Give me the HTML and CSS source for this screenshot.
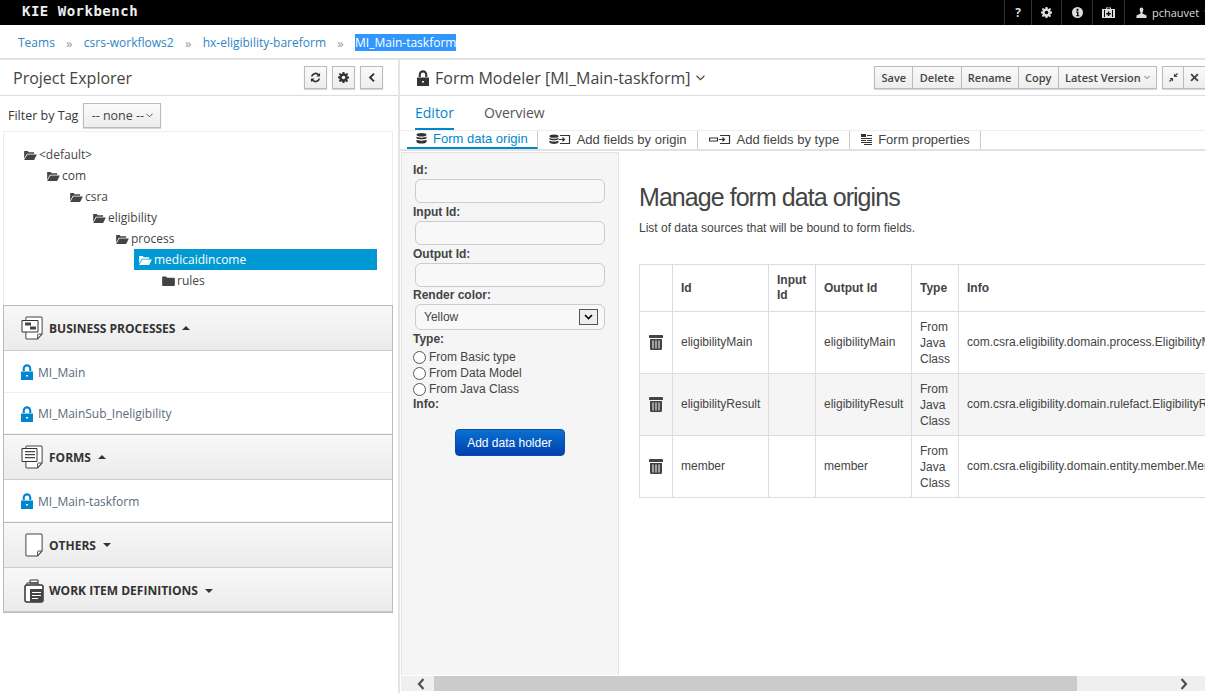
FILE: index.html
```html
<!DOCTYPE html>
<html lang="en">
<head>
    <meta charset="UTF-8">
    <title>KIE Workbench</title>
    <link rel="stylesheet" href="styles.css">
</head>
<body>
    <svg class="defs" width="0" height="0">
        <symbol id="folder-open" viewBox="0 0 14 11"><path d="M0 1h4l1 1.5h6V4H3L0 9.5zM3.6 5H14l-3 6H0z"/></symbol>
        <symbol id="lock" viewBox="0 0 12 16"><path d="M0 7.5h12V16H0zM1.7 7V4.6a4.3 4.3 0 0 1 8.6 0V7H8.2V4.6a2.2 2.2 0 0 0-4.4 0V7zM5 11v1.6h2V11z" fill-rule="evenodd"/></symbol>
        <symbol id="page" viewBox="0 0 20 24" preserveAspectRatio="none"><path d="M2 1h16a1 1 0 0 1 1 1v16l-5 5H2a1 1 0 0 1-1-1V2a1 1 0 0 1 1-1z" fill="#fff" stroke="#444" stroke-width="1.1"/><path d="M19 18h-4a1 1 0 0 0-1 1v4" fill="none" stroke="#444"/></symbol>
        <symbol id="trash" viewBox="0 0 14 15"><path d="M1 0h12a1 1 0 0 1 1 1v2H0V1a1 1 0 0 1 1-1zM1 4h12v9.500a1.500 1.500 0 0 1-1.500 1.500h-9A1.500 1.500 0 0 1 1 13.500zM3.500 5.500v8h1v-8zM6.500 5.500v8h1v-8zM9.500 5.500v8h1v-8z" fill-rule="evenodd"/></symbol>
        <symbol id="db" viewBox="0 0 11 11"><ellipse cx="5.500" cy="1.800" rx="5" ry="1.800"/><path d="M.5 3.600c1 1.500 9 1.500 10 0v1.600c-1 1.500-9 1.500-10 0zM.5 6.500c1 1.500 9 1.500 10 0v2.400c-1 2-9 2-10 0z"/></symbol>
        <symbol id="gear" viewBox="0 0 12 12"><path d="M5 0h2l.3 1.600 1.100.5L9.800 1l1.300 1.300-1.100 1.400.5 1.100 1.500.2v2l-1.500.3-.5 1.100 1 1.400-1.300 1.300-1.400-1-1.100.5L7 12H5l-.3-1.500-1.100-.5-1.400 1L.9 9.700l1-1.400-.5-1.100L0 7V5l1.500-.2.500-1.100-1.100-1.400L2.200 1l1.400 1.100 1.100-.5zM6 4a2 2 0 1 0 0 4 2 2 0 0 0 0-4z" fill-rule="evenodd"/></symbol>
    </svg>

    <header class="topbar">
        <div class="brand">KIE Workbench</div>
        <nav class="topmenu">
            <span class="topitem help"><b>?</b></span>
            <span class="topitem"><svg class="i11"><use href="#gear"/></svg></span>
            <span class="topitem info"><svg class="i11" viewBox="0 0 12 12"><path d="M6 0a6 6 0 1 0 0 12A6 6 0 0 0 6 0zM5 2h2v2H5zM4.500 5H7v4h1v1H4.500V9h1V6h-1z" fill-rule="evenodd"/></svg></span>
            <span class="topitem case"><svg class="i12" viewBox="0 0 13 11"><path d="M4 2V.5h5V2h4v9H0V2zM5 2h3V1.300H5zM2 3v7h1V3zM10 3v7h1V3zM5.800 4.500v1.500H4.300v1.500h1.500V9h1.500V7.500h1.500V6H7.300V4.500z" fill-rule="evenodd"/></svg></span>
            <span class="topitem user"><svg class="i11" viewBox="0 0 12 12"><path d="M4 2.500a2 2 0 0 1 4 0c0 1.500-.5 3-1 3.500v1.200l4.500 2V12H.5V9.200L5 7.200V6c-.5-.5-1-2-1-3.500z"/></svg>pchauvet<svg class="caret" viewBox="0 0 8 5"><path d="M.5.5L4 4 7.500.5" fill="none" stroke="currentColor"/></svg></span>
        </nav>
    </header>

    <nav class="crumbs">
        <a>Teams</a><span class="sep">»</span>
        <a>csrs-workflows2</a><span class="sep">»</span>
        <a>hx-eligibility-bareform</a><span class="sep">»</span>
        <span class="selected">MI_Main-taskform</span>
    </nav>

    <div class="workspace">
        <aside class="explorer">
            <div class="panel-head">
                <h2>Project Explorer</h2>
                <div class="tools">
                    <button class="tool"><svg class="i11" viewBox="0 0 12 12"><path d="M1 5a5 5 0 0 1 8.500-2.800L11 1v4H7l1.300-1.500A3.200 3.200 0 0 0 2.900 5zM11 7a5 5 0 0 1-8.500 2.800L1 11V7h4L3.700 8.500A3.200 3.200 0 0 0 9.100 7z"/></svg></button>
                    <button class="tool"><svg class="i11"><use href="#gear"/></svg></button>
                    <button class="tool"><svg class="i11" viewBox="0 0 12 12"><path d="M8 1l1.500 1.500L6 6l3.500 3.500L8 11 3 6z"/></svg></button>
                </div>
            </div>
            <div class="filter">
                <label>Filter by Tag</label>
                <button class="select-btn">-- none --<svg class="caret" viewBox="0 0 8 5"><path d="M.5.5L4 4 7.500.5" fill="none" stroke="currentColor"/></svg></button>
            </div>
            <ul class="tree">
                <li class="l0"><svg class="fold"><use href="#folder-open"/></svg>&lt;default&gt;</li>
                <li class="l1"><svg class="fold"><use href="#folder-open"/></svg>com</li>
                <li class="l2"><svg class="fold"><use href="#folder-open"/></svg>csra</li>
                <li class="l3"><svg class="fold"><use href="#folder-open"/></svg>eligibility</li>
                <li class="l4"><svg class="fold"><use href="#folder-open"/></svg>process</li>
                <li class="l5 current"><svg class="fold"><use href="#folder-open"/></svg>medicaidincome</li>
                <li class="l6"><svg class="fold" viewBox="0 0 14 11"><path d="M0 1.500A1 1 0 0 1 1 .5h3.500l1 1.500H13a1 1 0 0 1 1 1v7a1 1 0 0 1-1 1H1a1 1 0 0 1-1-1z"/></svg>rules</li>
            </ul>
            <div class="accordion">
                <div class="acc-head">
                    <svg class="acc-icon"><use href="#page" x="4" width="18" height="24"/><path d="M1 4.500h16v11.500H1z" fill="#fff" stroke="#333"/><path d="M4 6.500h6v3H4zM9 10.500h6v3H9z" fill="#444"/></svg>
                    Business Processes<i class="up"></i>
                </div>
                <div class="acc-item"><svg class="lock"><use href="#lock"/></svg>MI_Main</div>
                <div class="acc-item"><svg class="lock"><use href="#lock"/></svg>MI_MainSub_Ineligibility</div>
                <div class="acc-head">
                    <svg class="acc-icon"><use href="#page" x="4" width="18" height="24"/><path d="M1 3.500h15v13H1z" fill="#fff" stroke="#333"/><path d="M4 6h10v1.200H4zM4 9h10v1.200H4zM4 12h10v1.200H4z" fill="#444"/></svg>
                    Forms<i class="up"></i>
                </div>
                <div class="acc-item"><svg class="lock"><use href="#lock"/></svg>MI_Main-taskform</div>
                <div class="acc-head low">
                    <svg class="acc-icon"><use href="#page" x="4" width="18" height="24"/></svg>
                    Others<i class="down"></i>
                </div>
                <div class="acc-head low">
                    <svg class="acc-icon" viewBox="-3 0 22 24"><path d="M6 1h8v3H6zM3 4h11v3H3z" fill="#fff" stroke="#333"/><rect x="1" y="6" width="18" height="17" rx="2" fill="#fff" stroke="#333" stroke-width="1.500"/><rect x="6" y="10" width="13" height="13" fill="#444"/><path d="M8 13h9v1H8zM8 16h9v1H8zM8 19h6v1H8z" fill="#fff"/></svg>
                    Work Item Definitions<i class="down"></i>
                </div>
            </div>
        </aside>

        <main class="editor">
            <div class="title-row">
                <h1><svg class="title-lock"><use href="#lock"/></svg>Form Modeler [MI_Main-taskform]<svg class="title-caret" viewBox="0 0 8 5"><path d="M.5.5L4 4 7.500.5" fill="none" stroke="currentColor"/></svg></h1>
                <div class="actions">
                    <div class="btn-group">
                        <button>Save</button><button>Delete</button><button>Rename</button><button>Copy</button><button>Latest Version<svg class="caret small" viewBox="0 0 8 5"><path d="M.5.5L4 4 7.500.5" fill="none" stroke="currentColor"/></svg></button>
                    </div>
                    <div class="btn-group win">
                        <button><svg class="i9" viewBox="0 0 10 10"><path d="M10 1L9 0 7 2 5.500.5V4.500h4L8 3zM0 9l1 1 2-2 1.500 1.500V5.500h-4L2 7z"/></svg></button><button><svg class="i9" viewBox="0 0 10 10"><path d="M2 .5L5 3.500 8 .5 9.500 2 6.500 5l3 3L8 9.500l-3-3-3 3L.5 8l3-3-3-3z"/></svg></button>
                    </div>
                </div>
            </div>
            <div class="tabs">
                <a class="active">Editor</a>
                <a>Overview</a>
            </div>
            <div class="subtabs">
                <a class="active"><svg class="sub-icon"><use href="#db"/></svg>Form data origin</a>
                <a><svg class="sub-icon wide" viewBox="0 0 22 11"><use href="#db" width="10" height="11"/><path d="M11 1.500h9.500v8H11M10 5.500h5M13.500 3.500l2 2-2 2" fill="none" stroke="#333" stroke-width="1.200"/></svg>Add fields by origin</a>
                <a><svg class="sub-icon wide" viewBox="0 0 22 11"><path d="M.5 4h8v3h-8zM11 1.500h9.500v8H11M10 5.500h5M13.500 3.500l2 2-2 2" fill="none" stroke="#333" stroke-width="1.200"/></svg>Add fields by type</a>
                <a><svg class="sub-icon" viewBox="0 0 11 11"><path d="M0 0h5v3H0zM6 1h5v1H6zM0 4h11v1H0zM0 6h5v1H0zM6 6h5v1H6zM0 8h11v1H0zM3 10h8v1H3z"/></svg>Form properties</a>
            </div>
            <div class="modeler">
                <form class="origin-form">
                    <label>Id:</label>
                    <input class="field" type="text">
                    <label>Input Id:</label>
                    <input class="field" type="text">
                    <label>Output Id:</label>
                    <input class="field last" type="text">
                    <label>Render color:</label>
                    <div class="field colour">Yellow<span class="drop"><svg viewBox="0 0 9 6" width="9" height="6"><path d="M1 1l3.500 3.500L8 1" fill="none" stroke="#000" stroke-width="1.600"/></svg></span></div>
                    <label>Type:</label>
                    <div class="radio"><i></i>From Basic type</div>
                    <div class="radio"><i></i>From Data Model</div>
                    <div class="radio"><i></i>From Java Class</div>
                    <label>Info:</label>
                    <div class="add-wrap"><button type="button" class="add">Add data holder</button></div>
                </form>
                <section class="origins">
                    <h3>Manage form data origins</h3>
                    <p>List of data sources that will be bound to form fields.</p>
                    <table>
                        <thead>
                            <tr class="head"><th class="c-del"></th><th class="c-id">Id</th><th class="c-in">Input Id</th><th class="c-out">Output Id</th><th class="c-type">Type</th><th class="c-info">Info</th></tr>
                        </thead>
                        <tbody>
                            <tr><td class="c-del"><svg class="trash"><use href="#trash"/></svg></td><td>eligibilityMain</td><td></td><td>eligibilityMain</td><td class="c-type">From Java Class</td><td>com.csra.eligibility.domain.process.EligibilityMain</td></tr>
                            <tr class="odd"><td class="c-del"><svg class="trash"><use href="#trash"/></svg></td><td>eligibilityResult</td><td></td><td>eligibilityResult</td><td class="c-type">From Java Class</td><td>com.csra.eligibility.domain.rulefact.EligibilityResult</td></tr>
                            <tr><td class="c-del"><svg class="trash"><use href="#trash"/></svg></td><td>member</td><td></td><td>member</td><td class="c-type">From Java Class</td><td>com.csra.eligibility.domain.entity.member.Member</td></tr>
                        </tbody>
                    </table>
                </section>
            </div>
            <div class="hscroll">
                <span class="arrow prev"><svg viewBox="0 0 8 12" width="8" height="12"><path d="M6.500 1L2 6l4.500 5" fill="none" stroke="#505050" stroke-width="2.200"/></svg></span>
                <div class="track"><div class="thumb"></div></div>
                <span class="arrow next"><svg viewBox="0 0 8 12" width="8" height="12"><path d="M1.500 1L6 6l-4.500 5" fill="none" stroke="#505050" stroke-width="2.200"/></svg></span>
            </div>
        </main>
    </div>
</body>
</html>
```

FILE: styles.css
```css
* {
    box-sizing: border-box;
}
html, body {
    height: 100%;
}
body {
    margin: 0;
    overflow: hidden;
    display: flex;
    flex-direction: column;
    background-color: #fff;
    color: #363636;
    font-family: "Open Sans", sans-serif;
    font-size: 13px;
}
.defs {
    position: absolute;
}
svg {
    fill: currentColor;
    flex: none;
}
button {
    font-family: inherit;
}
.i9 { width: 9px; height: 9px; }
.i11 { width: 11px; height: 11px; }
.i12 { width: 13px; height: 11px; }

/* top bar */
.topbar {
    height: 25px;
    flex: none;
    background-color: #000;
    color: #ddd;
    display: flex;
    justify-content: space-between;
}
.brand {
    padding-left: 22px;
    font-family: "DejaVu Sans Mono", monospace;
    font-weight: bold;
    font-size: 14px;
    line-height: 22px;
    color: #eee;
    letter-spacing: .5px;
}
.topmenu {
    display: flex;
}
.topitem {
    border-left: 1px solid #333;
    width: 30px;
    display: flex;
    align-items: center;
    justify-content: center;
    font-size: 12px;
}
.topitem.help {
    width: 27px;
}
.topitem.info {
    width: 31px;
}
.topitem.case {
    width: 32px;
}
.topitem.user {
    width: 81px;
    justify-content: flex-start;
    padding-left: 11px;
    gap: 5px;
    font-size: 11px;
    white-space: nowrap;
}

/* breadcrumb */
.crumbs {
    height: 35px;
    flex: none;
    padding: 2px 0 0 18px;
    display: flex;
    align-items: center;
    font-size: 12px;
    border-bottom: 2px solid #e2e2e2;
}
.crumbs a {
    color: #2f85c4;
}
.sep {
    color: #999;
    font-size: 13px;
    width: 29px;
    text-align: center;
}
.selected {
    background-color: #3297fd;
    color: #fff;
}

.workspace {
    flex: 1;
    display: flex;
    min-height: 0;
}

/* left side */
.explorer {
    width: 400px;
    flex: none;
    border-right: 2px solid #e4e4e4;
    padding-right: 3px;
}
.panel-head {
    height: 36px;
    margin-right: -3px;
    display: flex;
    justify-content: space-between;
    align-items: center;
    padding: 0 15px 0 13px;
    border-bottom: 1px solid #ddd;
}
.panel-head h2 {
    margin: 0;
    font-size: 16px;
    font-weight: normal;
    color: #444;
}
.tools {
    display: flex;
    gap: 5px;
}
.tool {
    width: 23px;
    height: 23px;
    padding: 0;
    border: 1px solid #bbb;
    background: linear-gradient(#fafafa, #ededed);
    box-shadow: 0 1px 1px rgba(0, 0, 0, .15);
    color: #333;
    display: flex;
    align-items: center;
    justify-content: center;
}
.filter {
    height: 35px;
    display: flex;
    align-items: center;
    padding: 4px 0 0 8px;
    gap: 5px;
    font-size: 12.5px;
}
.select-btn {
    width: 78px;
    height: 25px;
    padding: 0;
    border: 1px solid #bbb;
    background: linear-gradient(#fafafa, #ededed);
    box-shadow: 0 1px 1px rgba(0, 0, 0, .15);
    color: #444;
    font-size: 12.5px;
    display: flex;
    align-items: center;
    justify-content: center;
    gap: 2px;
}
.caret {
    width: 7px;
    height: 5px;
}
.tree {
    list-style: none;
    margin: 0 0 0 3px;
    padding: 12px 0 0;
    height: 174px;
    width: 390px;
    border: 1px solid #ededed;
    border-bottom: 0;
    font-size: 12px;
    color: #444;
}
.tree li {
    height: 21px;
    line-height: 20px;
    display: flex;
    align-items: center;
    gap: 2px;
    white-space: nowrap;
}
.fold {
    width: 13px;
    height: 10px;
}
.l0 { padding-left: 20px; }
.l1 { padding-left: 43px; }
.l2 { padding-left: 66px; }
.l3 { padding-left: 89px; }
.l4 { padding-left: 112px; }
.l5 { padding-left: 135px; }
.l6 { padding-left: 158px; }
.tree li.current {
    margin-left: 130px;
    width: 243px;
    padding-left: 5px;
    background-color: #0099d3;
    color: #fff;
}
.accordion {
    margin-left: 3px;
    width: 390px;
    border: 1px solid #bbb;
    border-top: 0;
    font-size: 12px;
}
.acc-head {
    display: flex;
    align-items: center;
    padding-left: 17px;
    height: 46px;
    border-top: 1px solid #bbb;
    border-bottom: 1px solid #ccc;
    background: linear-gradient(#f8f8f8, #ebebeb);
    font-weight: bold;
    text-transform: uppercase;
    color: #333;
}
.acc-head.low {
    padding-top: 1px;
}
.acc-head + .acc-head {
    border-top: 0;
    height: 44.5px;
    padding-top: 3px;
}
.acc-icon {
    width: 22px;
    height: 24px;
    margin-right: 6px;
    overflow: visible;
}
.up, .down {
    margin-left: 7px;
    border-left: 4px solid transparent;
    border-right: 4px solid transparent;
}
.up {
    border-bottom: 4px solid #333;
}
.down {
    border-top: 4px solid #333;
}
.acc-item {
    height: 41.5px;
    display: flex;
    align-items: center;
    padding: 2px 0 0 17px;
    gap: 5px;
    color: #5a6b7a;
    font-size: 12px;
    border-bottom: 1px solid #f0f0f0;
}
.lock {
    width: 12px;
    height: 16px;
    color: #0085cf;
}

/* right side */
.editor {
    flex: 1;
    min-width: 0;
    display: flex;
    flex-direction: column;
}
.title-row {
    height: 36px;
    flex: none;
    border-bottom: 1px solid #ddd;
    display: flex;
    justify-content: space-between;
    align-items: center;
    padding-left: 17px;
}
.title-row h1 {
    margin: 0;
    font-size: 16px;
    font-weight: normal;
    color: #444;
    display: flex;
    align-items: center;
    white-space: nowrap;
}
.title-lock {
    width: 12px;
    height: 16px;
    margin-right: 6px;
    color: #333;
}
.title-caret {
    width: 9px;
    height: 6px;
    margin-left: 5px;
}
.actions {
    display: flex;
    gap: 5px;
    flex: none;
    margin-right: -1px;
}
.btn-group {
    display: flex;
    box-shadow: 0 1px 1px rgba(0, 0, 0, .15);
}
.btn-group button {
    height: 23px;
    padding: 0 6.3px;
    border: 1px solid #bbb;
    border-left-width: 0;
    background: linear-gradient(#fafafa, #ededed);
    color: #444;
    font-size: 11px;
    font-weight: 600;
    display: flex;
    align-items: center;
    white-space: nowrap;
}
.btn-group button:first-child {
    border-left-width: 1px;
}
.caret.small {
    width: 6px;
    margin-left: 3px;
}
.win button {
    width: 22px;
    padding: 0;
    justify-content: center;
}
.tabs {
    height: 34px;
    flex: none;
    display: flex;
    gap: 30px;
    padding-left: 15px;
    font-size: 14px;
    color: #555;
}
.tabs a {
    line-height: 34px;
    height: 34px;
}
.tabs a.active {
    color: #0088ce;
    border-bottom: 2px solid #0088ce;
}
.subtabs {
    height: 21px;
    flex: none;
    display: flex;
    padding-left: 7px;
    border-top: 1px solid #eee;
    border-bottom: 2px solid #e2e2e2;
    font-family: "Liberation Sans", sans-serif;
    font-size: 13px;
}
.subtabs a {
    display: flex;
    align-items: center;
    gap: 6px;
    padding: 0 10px 1px 11px;
    height: 18px;
    border-right: 1px solid #ccc;
    color: #444;
}
.subtabs a.active {
    padding: 0 9px 2px;
    height: 18px;
    color: #0088ce;
    border-bottom: 2px solid #0088ce;
}
.sub-icon {
    width: 11px;
    height: 11px;
    color: #333;
}
.sub-icon.wide {
    width: 22px;
}
.modeler {
    flex: 1;
    min-height: 0;
    display: flex;
    padding-top: 1px;
    font-family: "Liberation Sans", sans-serif;
    font-size: 12px;
}
.origin-form {
    width: 218px;
    flex: none;
    margin-left: 1px;
    background-color: #f5f5f5;
    border: 1px solid #e3e3e3;
    border-bottom: 0;
    padding: 10px 12px 0 11px;
    color: #444;
}
.origin-form label {
    display: block;
    font-weight: bold;
    line-height: 15px;
}
.field {
    display: block;
    width: 190px;
    height: 24px;
    margin: .5px 0 2.5px 2px;
    padding: 0;
    background-color: #f8f8f8;
    border: 1px solid #ccc;
    border-radius: 6px;
}
.field.last {
    margin-bottom: 1px;
}
.colour {
    height: 26px;
    display: flex;
    align-items: center;
    justify-content: space-between;
    padding: 0 6px 0 8px;
    margin-top: 1px;
    margin-bottom: 2px;
    font-size: 12px;
}
.drop {
    width: 19px;
    height: 16px;
    background-color: #eee;
    border: 1px solid #555;
    display: flex;
    align-items: center;
    justify-content: center;
}
.radio {
    display: flex;
    align-items: center;
    height: 16px;
    gap: 3px;
}
.origin-form label + .radio {
    margin-top: 2.5px;
}
.radio i {
    width: 13px;
    height: 13px;
    border: 1px solid #555;
    border-radius: 50%;
    background-color: #fff;
}
.add-wrap {
    margin-top: 17px;
    text-align: center;
}
.add {
    width: 110px;
    height: 27px;
    border: 1px solid #0b4da8;
    border-radius: 4px;
    background: linear-gradient(#0a70d0, #0040b0);
    color: #fff;
    font-size: 12px;
    font-family: inherit;
    padding: 0;
}
.origins {
    flex: 1;
    min-width: 0;
    overflow: hidden;
    padding: 30px 0 0 20px;
    color: #444;
}
.origins h3 {
    margin: 0;
    font-size: 25px;
    line-height: 30px;
    font-weight: normal;
    letter-spacing: -.95px;
}
.origins p {
    margin: 9px 0 28px;
    line-height: 15px;
    font-size: 12px;
}
table {
    border-collapse: collapse;
    table-layout: fixed;
    width: 900px;
}
th, td {
    border: 1px solid #ddd;
    padding: 0 8px;
    text-align: left;
    line-height: 16px;
    white-space: normal;
}
th {
    line-height: 15px;
}
td {
    padding-bottom: 1px;
}
td.c-type {
    padding-bottom: 0;
}
.head {
    height: 47px;
}
tbody tr {
    height: 62px;
}
tr.odd td {
    background-color: #f5f5f5;
}
.c-del { width: 33px; padding: 0; text-align: center; }
.c-id { width: 96px; }
.c-in { width: 47px; }
.c-out { width: 96px; }
.c-type { width: 47px; }
.trash {
    display: block;
    margin: 0 auto;
    width: 14px;
    height: 15px;
    color: #444;
}
.hscroll {
    height: 15px;
    flex: none;
    margin: 1px 0 2px 1px;
    background-color: #efefef;
    display: flex;
    align-items: center;
}
.arrow {
    width: 33px;
    display: flex;
}
.arrow.prev {
    justify-content: flex-end;
    padding-right: 9px;
}
.arrow.next {
    padding-left: 12px;
    margin-right: 4px;
}
.track {
    flex: 1;
    height: 15px;
}
.thumb {
    width: 643px;
    height: 100%;
    background-color: #cbcbcb;
}
```
